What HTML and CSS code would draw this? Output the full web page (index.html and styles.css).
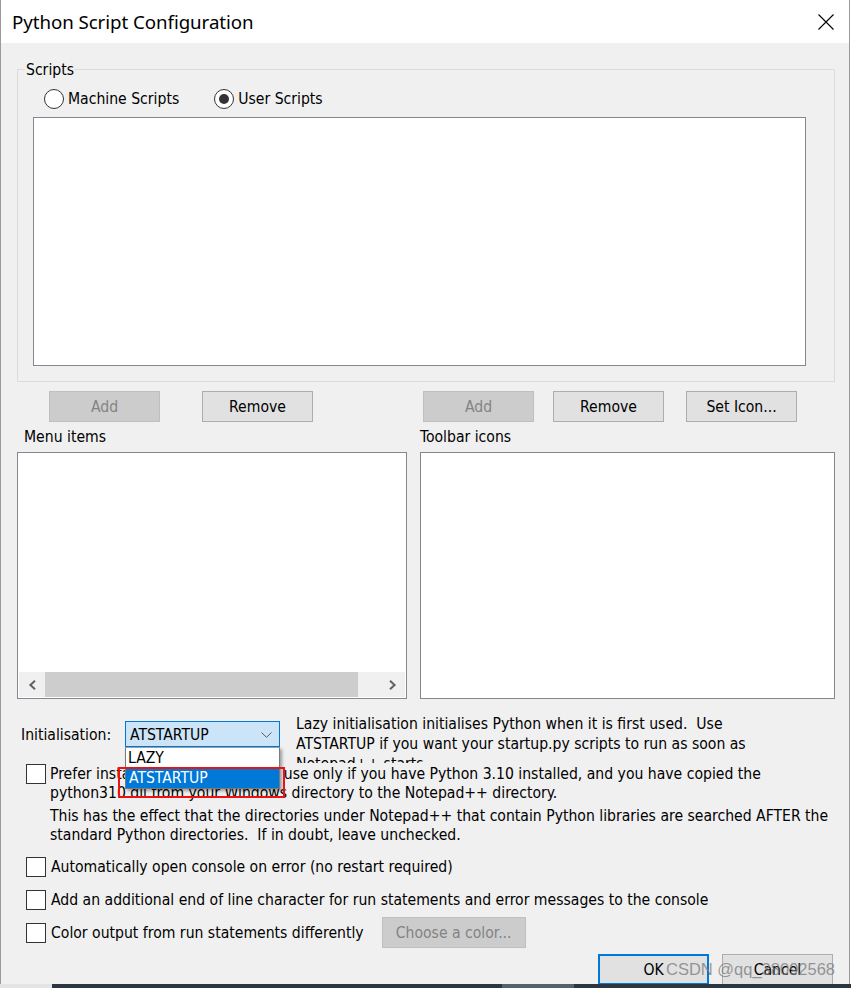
FILE: index.html
```html
<!DOCTYPE html>
<html>
<head>
<meta charset="utf-8">
<link rel="stylesheet" href="styles.css">
</head>
<body>
<div class="screen">
  <div class="window">
    <div class="titlebar">
      <span class="title">Python Script Configuration</span>
      <svg class="close" width="16" height="16" viewBox="0 0 16 16"><path d="M0.5 0.5L15.5 15.5M15.5 0.5L0.5 15.5" stroke="#000" stroke-width="1.1" fill="none"/></svg>
    </div>
    <div class="client">
      <fieldset class="group">
        <legend>Scripts</legend>
        <div class="radios">
          <div class="radio"><span class="circle"></span>Machine Scripts</div>
          <div class="radio checked"><span class="circle"><span class="pip"></span></span>User Scripts</div>
        </div>
        <div class="listbox scripts-list"></div>
      </fieldset>

      <div class="columns">
        <div class="col col-left">
          <div class="btnrow">
            <div class="btn disabled">Add</div>
            <div class="btn gap-remove-left">Remove</div>
          </div>
          <div class="caption">Menu items</div>
          <div class="listbox menu-list">
            <div class="hscroll">
              <span class="arrow"><svg width="9" height="10" viewBox="0 0 9 10"><path d="M7 0.8L2.4 5L7 9.2" stroke="#606060" stroke-width="2" fill="none"/></svg></span>
              <span class="thumb"></span>
              <span class="track"></span>
              <span class="arrow"><svg width="9" height="10" viewBox="0 0 9 10"><path d="M2 0.8L6.6 5L2 9.2" stroke="#606060" stroke-width="2" fill="none"/></svg></span>
            </div>
          </div>
        </div>
        <div class="col col-right">
          <div class="btnrow">
            <div class="btn disabled">Add</div>
            <div class="btn gap-remove-right">Remove</div>
            <div class="btn gap-seticon">Set Icon...</div>
          </div>
          <div class="caption">Toolbar icons</div>
          <div class="listbox toolbar-list"></div>
        </div>
      </div>

      <div class="init-row">
        <div class="init-left">
          <span class="init-label">Initialisation:</span>
          <div class="combo">
            <span class="combo-value">ATSTARTUP</span>
            <svg class="chev" width="11" height="6" viewBox="0 0 11 6"><path d="M0.5 0.5L5.5 5.3L10.5 0.5" stroke="#5a5a5a" stroke-width="1" fill="none"/></svg>
            <div class="popup">
              <div class="opt">LAZY</div>
              <div class="opt selected">ATSTARTUP</div>
            </div>
          </div>
        </div>
        <div class="init-desc">Lazy initialisation initialises Python when it is first used.&nbsp; Use<br>ATSTARTUP if you want your startup.py scripts to run as soon as<br>Notepad++ starts</div>
      </div>

      <div class="check-row first">
        <span class="box"></span>
        <div class="check-text">
          <p class="para">Prefer installed Python libraries - use only if you have Python 3.10 installed, and you have copied the<br>python310.dll from your Windows directory to the Notepad++ directory.</p>
          <p class="para second">This has the effect that the directories under Notepad++ that contain Python libraries are searched AFTER the<br>standard Python directories.&nbsp; If in doubt, leave unchecked.</p>
        </div>
      </div>

      <div class="check-row line first-line">
        <span class="box"></span>
        <span class="check-label">Automatically open console on error (no restart required)</span>
      </div>
      <div class="check-row line">
        <span class="box"></span>
        <span class="check-label">Add an additional end of line character for run statements and error messages to the console</span>
      </div>
      <div class="check-row line">
        <span class="box"></span>
        <span class="check-label">Color output from run statements differently</span>
        <div class="btn disabled choose">Choose a color...</div>
      </div>

      <div class="footer">
        <div class="btn ok">OK</div>
        <div class="btn cancel">Cancel</div>
      </div>
    </div>
    <div class="annotation"></div>
    <div class="watermark">CSDN @qq_38092568</div>
  </div>
  <div class="strip">
    <span class="seg light"></span>
    <span class="seg dark1"></span>
    <span class="seg mid"></span>
    <span class="seg dark2"></span>
  </div>
</div>
</body>
</html>
```

FILE: styles.css
```css
* { box-sizing: border-box; }
html, body { margin: 0; padding: 0; background: #ffffff; }
body {
  font-family: "DejaVu Sans Condensed", "DejaVu Sans", sans-serif;
  font-stretch: condensed;
  font-size: 15.6px;
  color: #000;
}
.screen { width: 851px; height: 988px; overflow: hidden; background: #fff; }
.window {
  position: relative;
  width: 850px;
  height: 984px;
  background: #f0f0f0;
  border-left: 1px solid #9a9a9a;
  border-right: 1px solid #9a9a9a;
  overflow: hidden;
}
.titlebar {
  height: 43px;
  background: #fff;
  display: flex;
  align-items: center;
  justify-content: space-between;
  padding: 0 15px 1px 11px;
}
.title {
  font-family: "Noto Sans", sans-serif;
  font-stretch: normal;
  font-size: 18.7px;
  letter-spacing: -0.05px;
}
.close { display: block; margin-top: 1px; }

.client { padding-left: 16px; }

.group {
  width: 818px;
  margin: 16px 0 0 0;
  padding: 0 0 15px 7px;
  border: 1px solid #dcdcdc;
  min-width: 0;
}
.group legend {
  padding: 2px 1px 0 1px;
  line-height: 18px;
  height: 20px;
}
.radios {
  display: flex;
  height: 20px;
  margin: 10px 0 0 19px;
}
.radio {
  display: flex;
  align-items: center;
  line-height: 20px;
}
.radio + .radio { margin-left: 35px; }
.circle {
  width: 20px;
  height: 20px;
  border: 1px solid #333;
  border-radius: 50%;
  background: #fff;
  margin-right: 4px;
  display: flex;
  align-items: center;
  justify-content: center;
}
.pip {
  width: 10px;
  height: 10px;
  border-radius: 50%;
  background: #333;
}
.listbox {
  background: #fff;
  border: 1px solid #828790;
}
.scripts-list {
  width: 773px;
  height: 249px;
  margin: 8px 0 0 8px;
}

.columns {
  display: grid;
  grid-template-columns: 390px 415px;
  column-gap: 13px;
  margin-top: 9px;
}
.btnrow { display: flex; height: 31px; }
.col-left .btnrow { padding-left: 32px; }
.col-right .btnrow { padding-left: 3px; }
.btn {
  width: 111px;
  height: 31px;
  background: #e1e1e1;
  border: 1px solid #adadad;
  display: flex;
  align-items: center;
  justify-content: center;
  line-height: 1;
  padding-top: 3px;
}
.btn.disabled {
  background: #cccccc;
  border-color: #bfbfbf;
  color: #838383;
}
.gap-remove-left { margin-left: 42px; }
.gap-remove-right { margin-left: 19px; }
.gap-seticon { margin-left: 22px; }
.caption { height: 30px; line-height: 29px; padding-top: 1px; }
.col-left .caption { padding-left: 7px; }
.col-right .caption { padding-left: 0; }
.menu-list, .toolbar-list { height: 247px; }
.menu-list {
  display: flex;
  flex-direction: column;
  justify-content: flex-end;
}
.hscroll {
  display: flex;
  height: 25px;
  margin: 0 1px 1px 1px;
  background: #f0f0f0;
}
.hscroll .arrow {
  width: 26px;
  display: flex;
  align-items: center;
  justify-content: center;
}
.hscroll .thumb { width: 313px; background: #cdcdcd; }
.hscroll .track { flex: 1; }

.init-row {
  display: flex;
  align-items: flex-start;
  margin-top: 14px;
}
.init-left {
  display: flex;
  align-items: center;
  margin-top: 8px;
}
.init-label { width: 108px; padding-left: 4px; padding-top: 2px; }
.combo {
  position: relative;
  width: 155px;
  height: 26px;
  background: #cce4f7;
  border: 1px solid #0078d7;
  display: flex;
  align-items: center;
  justify-content: space-between;
  padding: 1px 7px 0 4px;
}
.chev { display: block; margin-top: 0; }
.popup {
  position: absolute;
  top: 25px;
  left: -1px;
  width: 155px;
  background: #fff;
  border: 1px solid #7a7a7a;
  border-top-color: #a0a0a0;
  box-shadow: 2px 2px 3px rgba(0, 0, 0, 0.35);
  z-index: 5;
}
.opt {
  height: 20px;
  line-height: 21px;
  padding-left: 2px;
}
.opt.selected { background: #0078d7; color: #fff; padding-left: 3px; }
.init-desc {
  margin-left: 16px;
  height: 50px;
  overflow: hidden;
  line-height: 20px;
  padding-top: 1px;
  white-space: nowrap;
}

.check-row { display: flex; align-items: flex-start; }
.box {
  flex: none;
  width: 20px;
  height: 20px;
  background: #fff;
  border: 1px solid #333;
  margin-left: 9px;
}
.check-row.first .box { margin-top: 1px; }
.check-text { margin-left: 4px; padding-top: 2px; }
.para {
  margin: 0;
  line-height: 19px;
  white-space: nowrap;
}
.para.second { margin-top: 4px; }
.check-row.line {
  align-items: center;
  height: 33px;
}
.check-row.first-line { margin-top: 5px; }
.check-label { margin-left: 5px; white-space: nowrap; padding-top: 1px; }
.btn.choose { width: 144px; margin-left: 18px; }

.footer {
  display: flex;
  margin-top: 5px;
  padding-left: 581px;
}
.btn.ok { border: 2px solid #0078d7; }
.btn.cancel { margin-left: 13px; }

.annotation {
  position: absolute;
  left: 117px;
  top: 767px;
  width: 167px;
  height: 31px;
  border: 2px solid #ee1111;
  z-index: 6;
}
.watermark {
  position: absolute;
  left: 665px;
  top: 960px;
  font-family: "Liberation Sans", Arial, sans-serif;
  font-stretch: normal;
  font-size: 16.5px;
  color: rgba(120, 120, 120, 0.75);
  white-space: nowrap;
  z-index: 7;
}
.strip { display: flex; height: 4px; }
.seg { display: block; height: 4px; }
.seg.light { width: 52px; background: #e4e4e4; }
.seg.dark1 { width: 450px; background: #2c3641; }
.seg.mid { width: 72px; background: #56616c; }
.seg.dark2 { flex: 1; background: #2c3641; }
```
